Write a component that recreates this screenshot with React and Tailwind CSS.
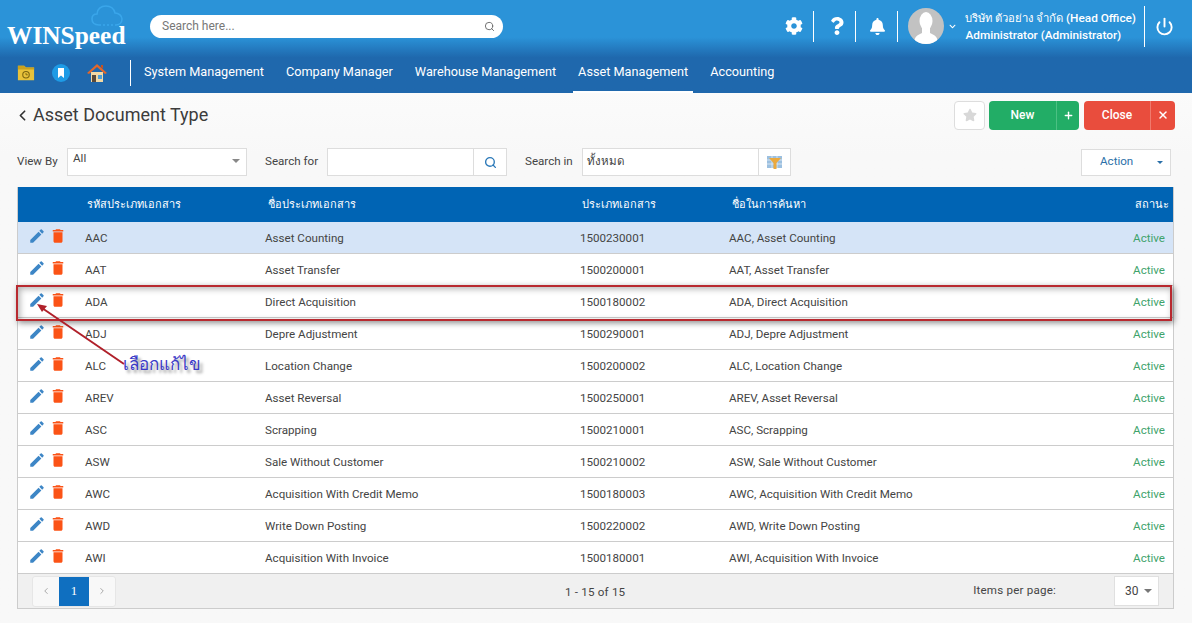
import { FaCog, FaQuestion, FaBell, FaStar, FaChevronDown } from 'react-icons/fa'
import { MdEdit, MdDelete } from 'react-icons/md'
import { Power, Search, ChevronLeft, ChevronRight, Plus, X } from 'lucide-react'

const ROWS = [
  ['AAC', 'Asset Counting', '1500230001'],
  ['AAT', 'Asset Transfer', '1500200001'],
  ['ADA', 'Direct Acquisition', '1500180002'],
  ['ADJ', 'Depre Adjustment', '1500290001'],
  ['ALC', 'Location Change', '1500200002'],
  ['AREV', 'Asset Reversal', '1500250001'],
  ['ASC', 'Scrapping', '1500210001'],
  ['ASW', 'Sale Without Customer', '1500210002'],
  ['AWC', 'Acquisition With Credit Memo', '1500180003'],
  ['AWD', 'Write Down Posting', '1500220002'],
  ['AWI', 'Acquisition With Invoice', '1500180001'],
]

const MENU = ['System Management', 'Company Manager', 'Warehouse Management', 'Asset Management', 'Accounting']

function Caret({ className = '' }) {
  return <span className={`w-0 h-0 border-x-[4px] border-x-transparent border-t-[4px] border-t-[#777] ${className}`} />
}

function Logo() {
  return (
    <div className="relative w-[130px] h-[52px] shrink-0">
      <svg className="absolute left-[91px] top-[4px]" width="32" height="24" viewBox="0 0 32 24" fill="none" stroke="#3aa6ea" strokeWidth="1.6">
        <path d="M8 21 C3 21 1 18 1 15 C1 12 3 10 6 10 C6 5 10 2 15 2 C20 2 23 5 24 9 C28 9 31 12 31 15 C31 19 28 21 25 21" />
        <path d="M8 21 H25" strokeDasharray="2 2" />
      </svg>
      <div className="absolute left-[7px] top-[19px] text-[25.4px] leading-[32px] font-bold text-white font-['Liberation_Serif',serif]">WINSpeed</div>
    </div>
  )
}

function FolderIcon() {
  return (
    <svg width="18" height="18" viewBox="0 0 20 20">
      <path d="M1 2 H8 L10 4 H19 V18 H1 Z" fill="#e8c23a" />
      <path d="M1 2 H8 L10 4 H19 V6 H1 Z" fill="#c9a11e" />
      <circle cx="10" cy="12" r="3.6" fill="none" stroke="#7a6410" strokeWidth="1.2" />
      <path d="M10 10 V12 H12" fill="none" stroke="#7a6410" strokeWidth="1" />
    </svg>
  )
}

function BookmarkIcon() {
  return (
    <svg width="18" height="18" viewBox="0 0 18 18">
      <circle cx="9" cy="9" r="9" fill="#1e9be6" />
      <path d="M6 4 H12 V14 L9 11.5 L6 14 Z" fill="#fff" />
    </svg>
  )
}

function HomeIcon() {
  return (
    <svg width="20" height="20" viewBox="0 0 20 20">
      <path d="M4 9 H16 V19 H4 Z" fill="#f3d9a4" />
      <path d="M10 1 L20 10 L18 11 L10 4 L2 11 L0 10 Z" fill="#e2672a" />
      <path d="M14 2 H16 V6 L14 4 Z" fill="#c9501c" />
      <path d="M5 12 H9 V19 H5 Z" fill="#5a4a3a" />
      <path d="M11 12 H15 V16 H11 Z" fill="#4f9fd8" />
    </svg>
  )
}

function Avatar() {
  return (
    <svg className="shrink-0" width="36" height="36" viewBox="0 0 36 36">
      <circle cx="18" cy="18" r="18" fill="#c2c2c2" />
      <clipPath id="avatar"><circle cx="18" cy="18" r="18" /></clipPath>
      <g clipPath="url(#avatar)" fill="#fff">
        <ellipse cx="18" cy="13" rx="6.5" ry="9" />
        <path d="M14 20 H22 V25 C26 27 30 28 30 36 H6 C6 28 10 27 14 25 Z" />
      </g>
    </svg>
  )
}

function Header() {
  return (
    <header className="bg-gradient-to-b from-[#2b93d8] from-[40%] to-[#1f68ad] to-[62%] h-[93px] text-white font-['Roboto','Noto_Sans',sans-serif]">
      <div className="h-[52px] flex items-center">
        <Logo />
        <div className="w-[353px] h-[23px] ml-[20px] bg-white rounded-full flex items-center justify-between pl-[12px] pr-[8px] text-[12px] text-[#777]">
          <span>Search here...</span>
          <Search size={11} color="#666" />
        </div>
        <div className="ml-auto flex items-center h-full">
          <FaCog size={18} />
          <div className="w-px h-[31px] bg-white ml-[10px] mr-[14px]" />
          <FaQuestion size={18} />
          <div className="w-px h-[31px] bg-white ml-[9px] mr-[13px]" />
          <FaBell size={17} />
          <div className="w-px h-[31px] bg-white ml-[11px] mr-[10px]" />
          <Avatar />
          <FaChevronDown size={7} className="ml-[5px] mr-[9px]" />
          <div className="text-[11.8px] leading-[16px] font-medium whitespace-nowrap">
            <div><span className="text-[11.25px]">บริษัท ตัวอย่าง จำกัด</span> (Head Office)</div>
            <div>Administrator (Administrator)</div>
          </div>
          <div className="w-px h-[41px] bg-white ml-[8px]" />
          <Power size={19} strokeWidth={2.4} className="ml-[10px] mr-[18px]" />
        </div>
      </div>
      <nav className="h-[41px] flex items-center pl-[17px]">
        <div className="flex items-center gap-[17px]">
          <FolderIcon />
          <BookmarkIcon />
          <HomeIcon />
        </div>
        <div className="w-px h-[26px] bg-white ml-[23px] mr-[2px]" />
        {MENU.map(item => (
          <div key={item} className={`h-full flex items-center px-[5px] mx-[6px] text-[12.7px] ${item === 'Asset Management' ? 'border-b-2 border-white' : 'pb-[2px]'}`}>
            {item}
          </div>
        ))}
      </nav>
    </header>
  )
}

function Toolbar() {
  return (
    <div className="px-[17px]">
      <div className="h-[44px] flex items-center">
        <ChevronLeft size={17} strokeWidth={2.4} color="#333" className="ml-[-3px] mr-[2px]" />
        <h1 className="text-[18px] text-[#3c3c3c] mt-[-1px]">Asset Document Type</h1>
        <div className="ml-auto flex items-center text-[12px] text-white font-medium">
          <div className="w-[31px] h-[29px] border border-[#ddd] rounded-[4px] bg-white flex items-center justify-center mr-[4px]">
            <FaStar size={14} color="#d8d8d8" />
          </div>
          <div className="w-[90px] h-[29px] bg-[#22ad66] rounded-[4px] flex mr-[5px]">
            <span className="flex-1 flex items-center justify-center border-r border-[#4cc083]">New</span>
            <span className="w-[22px] flex items-center justify-center"><Plus size={11} strokeWidth={3} /></span>
          </div>
          <div className="w-[91px] h-[29px] bg-[#e94d3d] rounded-[4px] flex">
            <span className="flex-1 flex items-center justify-center border-r border-[#f07a6d]">Close</span>
            <span className="w-[24px] flex items-center justify-center"><X size={12} strokeWidth={3} /></span>
          </div>
        </div>
      </div>
      <div className="h-[28px] mt-[11px] pr-[4px] flex items-center text-[11.6px] text-[#444]">
        <span className="w-[50px]">View By</span>
        <div className="w-[180px] h-[28px] border border-[#ddd] bg-white flex justify-between pl-[5px] pr-[6px] pt-[1px]">
          <span>All</span>
          <Caret className="mt-[9px] border-t-[#888]" />
        </div>
        <span className="w-[62px] ml-[18px]">Search for</span>
        <div className="w-[180px] h-[28px] border border-[#ddd] bg-white flex justify-end">
          <span className="w-[33px] border-l border-[#ddd] flex items-center justify-center"><Search size={13} strokeWidth={2.5} color="#2a78b8" /></span>
        </div>
        <span className="w-[57px] ml-[18px]">Search in</span>
        <div className="w-[209px] h-[28px] border border-[#ddd] bg-white flex items-center justify-between pl-[4px]">
          <span>ทั้งหมด</span>
          <span className="w-[32px] h-full border-l border-[#ddd] flex items-center justify-center">
            <svg width="15" height="14" viewBox="0 0 15 14">
              <path d="M0 1 H15 V13 H0 Z" fill="#9cc0e0" />
              <path d="M0 5 H15 M0 9 H15 M5 1 V13 M10 1 V13" stroke="#e4eef8" strokeWidth="0.8" />
              <path d="M2 3 H14 L9.5 8 V14 H6.5 V8 Z" fill="#eba93e" />
            </svg>
          </span>
        </div>
        <div className="ml-auto w-[90px] h-[27px] border border-[#ddd] bg-white flex items-center justify-between pl-[18px] pr-[7px] text-[#2a6fa8]">
          <span>Action</span>
          <span className="w-0 h-0 border-x-[3px] border-x-transparent border-t-[3px] border-t-[#2a6fa8]" />
        </div>
      </div>
    </div>
  )
}

function Table() {
  return (
    <div className="ml-[17px] mr-[18px] mt-[11px] border border-[#ccc] border-t-0 text-[11.6px] text-[#444]">
      <div className="h-[35px] pt-[2px] bg-[#0064b4] text-white text-[11px] grid grid-cols-[69px_181px_314px_150px_1fr_70px] items-center">
        <span />
        <span>รหัสประเภทเอกสาร</span>
        <span>ชื่อประเภทเอกสาร</span>
        <span>ประเภทเอกสาร</span>
        <span>ชื่อในการค้นหา</span>
        <span className="text-right pr-[4px]">สถานะ</span>
      </div>
      {ROWS.map((row, i) => (
        <div key={row[0]} className={`h-[32px] pt-[2px] grid grid-cols-[67px_180px_315px_149px_1fr_70px] items-center border-b border-[#ccc] ${i === 0 ? 'bg-[#d5e4f7]' : 'bg-white'}`}>
          <span className="flex items-center pl-[10px] gap-[3px] mt-[-5px]">
            <MdEdit size={18} color="#3d86c6" />
            <MdDelete size={18} color="#fb5316" />
          </span>
          <span>{row[0]}</span>
          <span>{row[1]}</span>
          <span>{row[2]}</span>
          <span>{row[0]}, {row[1]}</span>
          <span className="text-right pr-[8px] text-[#3ea36b]">Active</span>
        </div>
      ))}
      <div className="h-[34px] bg-[#f0f0f0] flex items-center pl-[14px] pr-[14px]">
        <div className="flex h-[31px] rounded-[3px] border border-[#e6e6e6] bg-[#f8f8f8]">
          <span className="w-[26px] flex items-center justify-center"><ChevronLeft size={10} color="#999" /></span>
          <span className="w-[30px] bg-[#0f6fc0] text-white text-[13px] font-['Liberation_Serif',serif] flex items-center justify-center">1</span>
          <span className="w-[26px] flex items-center justify-center"><ChevronRight size={10} color="#999" /></span>
        </div>
        <span className="ml-[449px] mt-[4px] tracking-[0.2px]">1 - 15 of 15</span>
        <span className="ml-auto mr-[58px] mt-[-1px] tracking-[0.2px]">Items per page:</span>
        <div className="w-[45px] h-[30px] bg-white border border-[#e0e0e0] flex items-center justify-between pl-[10px] pr-[6px] text-[12px]">
          <span>30</span>
          <Caret />
        </div>
      </div>
    </div>
  )
}

function Annotation() {
  return (
    <>
      <div className="absolute left-[16px] top-[285px] w-[1156px] h-[36px] border-2 border-[#b8292f] shadow-[2px_2px_6px_rgba(0,0,0,0.45),inset_2px_2px_6px_rgba(0,0,0,0.3)]" />
      <svg className="absolute left-0 top-0 pointer-events-none" width="200" height="400">
        <path d="M124 364 L42 308" stroke="#b0202a" strokeWidth="2" />
        <path d="M37 304 L47 306 L42 312 Z" fill="#b0202a" />
      </svg>
      <div className="absolute left-[123px] top-[351px] text-[17px] leading-[26px] text-[#3a3ac8] [text-shadow:3px_3px_3px_rgba(0,0,0,0.4)]">เลือกแก้ไข</div>
    </>
  )
}

export default function App() {
  return (
    <div className="relative w-[1192px] h-[623px] overflow-hidden bg-gradient-to-b from-white to-[#f8f8f8] to-[25%] font-['Roboto','Noto_Sans',sans-serif]">
      <Header />
      <Toolbar />
      <Table />
      <Annotation />
    </div>
  )
}
